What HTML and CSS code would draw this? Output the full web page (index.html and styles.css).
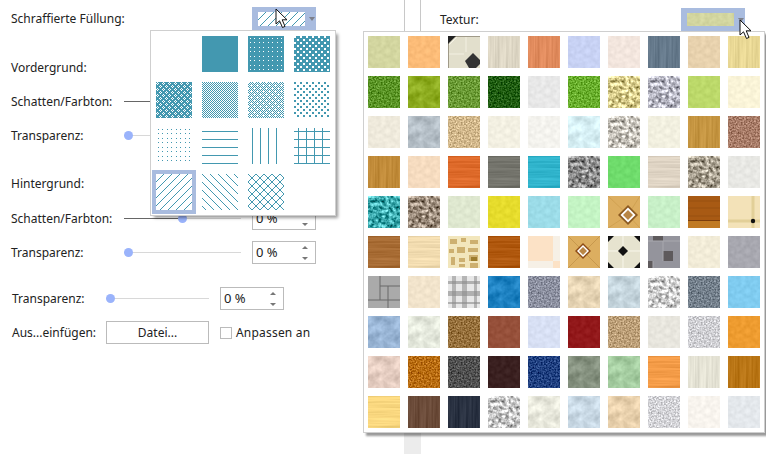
FILE: index.html
```html
<!DOCTYPE html>
<html lang="de">
<head>
<meta charset="utf-8">
<title>Füllung</title>
<link rel="stylesheet" href="styles.css">
</head>
<body>
<svg class="defs" width="0" height="0" aria-hidden="true">
  <defs>
    <pattern id="p-dots-a" width="9" height="9" patternUnits="userSpaceOnUse"><rect width="9" height="9" fill="#4398b0"/><path d="M2 2h1v1h-1zM6 2h1v1h-1zM2 6h1v1h-1zM6 6h1v1h-1z" fill="#fff"/></pattern>
    <pattern id="p-dots-b" width="6" height="6" patternUnits="userSpaceOnUse"><rect width="6" height="6" fill="#4398b0"/><path d="M0 0h2v2h-2zM3 3h2v2h-2z" fill="#fff"/></pattern>
    <pattern id="p-dense" width="6" height="6" patternUnits="userSpaceOnUse"><rect width="6" height="6" fill="#4398b0"/><path d="M1 0h1v1h-1zM0 1h1v1h-1zM2 1h1v1h-1zM1 2h1v1h-1zM4 3h1v1h-1zM3 4h1v1h-1zM5 4h1v1h-1zM4 5h1v1h-1z" fill="#fff"/></pattern>
    <pattern id="p-check" width="2" height="2" patternUnits="userSpaceOnUse"><path d="M0 0h1v1h-1zM1 1h1v1h-1z" fill="#4398b0"/></pattern>
    <pattern id="p-check-l" width="6" height="6" patternUnits="userSpaceOnUse"><path d="M2 0h1v1h-1zM4 0h1v1h-1zM1 1h1v1h-1zM3 1h1v1h-1zM5 1h1v1h-1zM0 2h1v1h-1zM2 2h1v1h-1zM4 2h1v1h-1zM1 3h1v1h-1zM5 3h1v1h-1zM0 4h1v1h-1zM2 4h1v1h-1zM4 4h1v1h-1zM1 5h1v1h-1zM3 5h1v1h-1zM5 5h1v1h-1z" fill="#4398b0"/></pattern>
    <pattern id="p-spots" width="6" height="6" patternUnits="userSpaceOnUse"><path d="M0 0h2v2h-2zM3 3h2v2h-2z" fill="#4398b0"/></pattern>
    <pattern id="p-fine" width="9" height="9" patternUnits="userSpaceOnUse"><path d="M2 1h1v1h-1zM6 1h1v1h-1zM2 5h1v1h-1zM6 5h1v1h-1z" fill="#4398b0"/></pattern>
    <pattern id="p-hl" width="8" height="8" patternUnits="userSpaceOnUse" y="3"><rect width="8" height="1" fill="#4398b0"/></pattern>
    <pattern id="p-vl" width="8" height="8" patternUnits="userSpaceOnUse" x="4"><rect width="1" height="8" fill="#4398b0"/></pattern>
    <pattern id="p-grid" width="8" height="8" patternUnits="userSpaceOnUse" x="4" y="3"><path d="M0 0h8v1h-8zM0 0h1v8h-1z" fill="#4398b0"/></pattern>
    <pattern id="p-up" width="8" height="8" patternUnits="userSpaceOnUse"><path d="M7 0h1v1h-1zM6 1h1v1h-1zM5 2h1v1h-1zM4 3h1v1h-1zM3 4h1v1h-1zM2 5h1v1h-1zM1 6h1v1h-1zM0 7h1v1h-1z" fill="#4398b0"/></pattern>
    <pattern id="p-down" width="8" height="8" patternUnits="userSpaceOnUse"><path d="M0 0h1v1h-1zM1 1h1v1h-1zM2 2h1v1h-1zM3 3h1v1h-1zM4 4h1v1h-1zM5 5h1v1h-1zM6 6h1v1h-1zM7 7h1v1h-1z" fill="#4398b0"/></pattern>
    <filter id="fine" x="0" y="0" width="1" height="1" color-interpolation-filters="sRGB"><feTurbulence type="fractalNoise" baseFrequency=".22" numOctaves="2" seed="4"/><feColorMatrix values="1 0 0 0 0 1 0 0 0 0 1 0 0 0 0 0 0 0 0 1"/><feComposite in="SourceGraphic" operator="arithmetic" k2="1" k3=".1" k4="-.05"/></filter>
    <filter id="wv" x="0" y="0" width="1" height="1" color-interpolation-filters="sRGB"><feTurbulence type="fractalNoise" baseFrequency=".5 .02" numOctaves="2" seed="7"/><feColorMatrix values="1 0 0 0 0 1 0 0 0 0 1 0 0 0 0 0 0 0 0 1"/><feComposite in="SourceGraphic" operator="arithmetic" k2="1" k3=".2" k4="-.1"/></filter>
    <filter id="wh" x="0" y="0" width="1" height="1" color-interpolation-filters="sRGB"><feTurbulence type="fractalNoise" baseFrequency=".02 .5" numOctaves="2" seed="9"/><feColorMatrix values="1 0 0 0 0 1 0 0 0 0 1 0 0 0 0 0 0 0 0 1"/><feComposite in="SourceGraphic" operator="arithmetic" k2="1" k3=".2" k4="-.1"/></filter>
    <filter id="speck" x="0" y="0" width="1" height="1" color-interpolation-filters="sRGB"><feTurbulence type="fractalNoise" baseFrequency=".6" numOctaves="2" seed="2"/><feColorMatrix values="1 0 0 0 0 1 0 0 0 0 1 0 0 0 0 0 0 0 0 1"/><feComposite in="SourceGraphic" operator="arithmetic" k2="1" k3=".6" k4="-.3"/></filter>
    <filter id="pebble" x="0" y="0" width="1" height="1" color-interpolation-filters="sRGB"><feTurbulence type="fractalNoise" baseFrequency=".28" numOctaves="3" seed="5"/><feColorMatrix values="1 0 0 0 0 1 0 0 0 0 1 0 0 0 0 0 0 0 0 1"/><feComposite in="SourceGraphic" operator="arithmetic" k2="1" k3="1.1" k4="-.55"/></filter>
    <filter id="marb" x="0" y="0" width="1" height="1" color-interpolation-filters="sRGB"><feTurbulence type="fractalNoise" baseFrequency=".12" numOctaves="3" seed="11"/><feColorMatrix values="1 0 0 0 0 1 0 0 0 0 1 0 0 0 0 0 0 0 0 1"/><feComposite in="SourceGraphic" operator="arithmetic" k2="1" k3=".28" k4="-.14"/></filter>
  </defs>
</svg>

<main class="page">
  <section class="left">
    <div class="row row-first"><span class="lab">Schraffierte Füllung:</span>
      <span class="pick"><svg class="swatch" width="47" height="14"><rect width="47" height="14" fill="#fff"/><rect width="47" height="14" fill="url(#p-up)"/></svg><i class="caret"></i></span>
    </div>
    <div class="row row-head"><span class="lab">Vordergrund:</span></div>
    <div class="row row-sub row-sub-top"><span class="lab">Schatten/Farbton:</span><span class="slider"><i class="fill"></i></span><span class="spin"><b>0 %</b><em></em></span></div>
    <div class="row row-sub"><span class="lab">Transparenz:</span><span class="slider"><i class="thumb0"></i></span><span class="spin"><b>0 %</b><em></em></span></div>
    <div class="row row-head row-head2"><span class="lab">Hintergrund:</span></div>
    <div class="row row-sub"><span class="lab">Schatten/Farbton:</span><span class="slider"><i class="fill"></i></span><span class="spin"><b>0 %</b><em></em></span></div>
    <div class="row row-sub"><span class="lab">Transparenz:</span><span class="slider"><i class="thumb0"></i></span><span class="spin"><b>0 %</b><em></em></span></div>
    <div class="row row-low"><span class="lab lab-short">Transparenz:</span><span class="slider slider-short"><i class="thumb0"></i></span><span class="spin spin-low"><b>0 %</b><em></em></span></div>
    <div class="row row-file"><span class="lab lab-short">Aus...einfügen:</span><button class="file">Datei...</button><span class="check"></span><span class="fit">Anpassen an</span></div>
  </section>

  <div class="divider"><div class="divider-fill"></div></div>

  <section class="right">
    <span class="lab">Textur:</span>
    <span class="pick pick-tex"><span class="swatch-tex"></span><i class="caret"></i></span>
  </section>

  <div class="pop pop-hatch">
    <svg class="ht"></svg>
    <svg class="ht"><rect width="36" height="36" fill="#4398b0"/></svg>
    <svg class="ht"><rect width="36" height="36" fill="url(#p-dots-a)"/></svg>
    <svg class="ht"><rect width="36" height="36" fill="url(#p-dots-b)"/></svg>
    <svg class="ht"><rect width="36" height="36" fill="url(#p-dense)"/></svg>
    <svg class="ht"><rect width="36" height="36" fill="url(#p-check)"/></svg>
    <svg class="ht"><rect width="36" height="36" fill="url(#p-check-l)"/></svg>
    <svg class="ht"><rect width="36" height="36" fill="url(#p-spots)"/></svg>
    <svg class="ht"><rect width="36" height="36" fill="url(#p-fine)"/></svg>
    <svg class="ht"><rect width="36" height="36" fill="url(#p-hl)"/></svg>
    <svg class="ht"><rect width="36" height="36" fill="url(#p-vl)"/></svg>
    <svg class="ht"><rect width="36" height="36" fill="url(#p-grid)"/></svg>
    <svg class="ht ht-sel"><rect width="36" height="36" fill="url(#p-up)"/></svg>
    <svg class="ht"><rect width="36" height="36" fill="url(#p-down)"/></svg>
    <svg class="ht"><rect width="36" height="36" fill="url(#p-up)"/><rect width="36" height="36" fill="url(#p-down)"/></svg>
    <svg class="ht"></svg>
  </div>

  <div class="pop pop-tex">
    <i class="tx fine c00"></i>
    <i class="tx fine c01"></i>
    <svg class="tx-s" viewBox="0 0 32 32"><rect width="32" height="32" fill="#e2dfcc"/><path d="M0 .5H32M.5 0V32" stroke="#a09a88"/><path d="M8 0H0V8z" fill="#222"/><path d="M25 17L32 24V28L28 32H21L17 25z" fill="#333"/><path d="M9 1L1 9" stroke="#f5f2e6"/><path d="M1 18H16M18 1V16" stroke="#f3f0e2"/></svg>
    <i class="tx wv c03"></i>
    <i class="tx wv c04"></i>
    <i class="tx fine c05"></i>
    <i class="tx fine c06"></i>
    <i class="tx wv c07"></i>
    <i class="tx fine c08"></i>
    <i class="tx wv c09"></i>

    <i class="tx speck c10"></i>
    <i class="tx marb c11"></i>
    <i class="tx speck c12"></i>
    <i class="tx speck c13"></i>
    <i class="tx fine c14"></i>
    <i class="tx speck c15"></i>
    <i class="tx pebble c16"></i>
    <i class="tx pebble c17"></i>
    <i class="tx fine c18"></i>
    <i class="tx fine c19"></i>

    <i class="tx fine c20"></i>
    <i class="tx marb c21"></i>
    <i class="tx speck c22"></i>
    <i class="tx fine c23"></i>
    <i class="tx fine c24"></i>
    <i class="tx marb c25"></i>
    <i class="tx pebble c26"></i>
    <i class="tx fine c27"></i>
    <i class="tx wv c28"></i>
    <i class="tx speck c29"></i>

    <i class="tx wv c30"></i>
    <i class="tx fine c31"></i>
    <i class="tx wh c32"></i>
    <i class="tx wh c33"></i>
    <i class="tx wh c34"></i>
    <i class="tx pebble c35"></i>
    <i class="tx fine c36"></i>
    <i class="tx wh c37"></i>
    <i class="tx pebble c38"></i>
    <i class="tx fine c39"></i>

    <i class="tx pebble c40"></i>
    <i class="tx pebble c41"></i>
    <i class="tx fine c42"></i>
    <i class="tx fine c43"></i>
    <i class="tx fine c44"></i>
    <i class="tx fine c45"></i>
    <svg class="tx-s" viewBox="0 0 32 32"><rect width="32" height="32" fill="#dcae60"/><path d="M0 0L20 19M32 0L20 19M0 32L20 19M32 32L20 19" stroke="#c89848" stroke-width=".6"/><path d="M20 9L30 19 20 29 10 19z" fill="#8c5a20"/><path d="M20 11.500L27.500 19 20 26.500 12.500 19z" fill="#fff"/><path d="M20 14L25 19 20 24 15 19z" fill="#b98645"/></svg>
    <i class="tx fine c47"></i>
    <svg class="tx-s" viewBox="0 0 32 32"><rect width="32" height="32" fill="#a85a14"/><path d="M0 5H32M0 12H32M0 20H32" stroke="#8e4a0e" opacity=".6"/><rect y="24" width="32" height="8" fill="#c07a24"/><rect y="24" width="32" height="1" fill="#7c3e0c"/></svg>
    <svg class="tx-s" viewBox="0 0 32 32"><rect width="32" height="32" fill="#f3e2b8"/><path d="M0 25H32M25 0V32" stroke="#e2cf98" stroke-width="3"/><circle cx="25" cy="25" r="2.200" fill="#111"/></svg>

    <i class="tx wh c50"></i>
    <i class="tx wh c51"></i>
    <svg class="tx-s" viewBox="0 0 32 32"><rect width="32" height="32" fill="#f2e6bc"/><path d="M2 3h7v5h-7zM13 2h5v4h-5zM22 4h8v4h-8zM1 13h5v4h-5zM9 11h8v6h-8zM20 12h10v4h-10zM3 21h4v8h-4zM11 22h6v4h-6zM21 19h9v6h-9zM22 27h8v5h-8zM11 28h6v3h-6z" fill="#cdb070"/><path d="M23 21h6v4h-6z" fill="#9c7c2c"/></svg>
    <i class="tx wh c53"></i>
    <svg class="tx-s" viewBox="0 0 32 32"><rect width="32" height="32" fill="#fce2c6"/><path d="M25 0h7v25h-7zM0 25h25v7h-25z" fill="#f6f0e6"/></svg>
    <svg class="tx-s" viewBox="0 0 32 32"><rect width="32" height="32" fill="#dcae60"/><path d="M0 0L32 32M32 0L0 32" stroke="#b88a40" stroke-width=".6"/><path d="M15 7L23 15 15 23 7 15z" fill="#8c4a14"/><path d="M15 9L21 15 15 21 9 15z" fill="#fff"/><path d="M15 11L19 15 15 19 11 15z" fill="#b98645"/></svg>
    <svg class="tx-s" viewBox="0 0 32 32"><rect width="32" height="32" fill="#e6e3cf"/><path d="M0 0h6L0 6zM32 0h-6l6 6zM0 32h6l-6-6zM32 32h-6l6-6z" fill="#111"/><path d="M15 10l5 5-5 5-5-5z" fill="#111"/><path d="M15 0v10M15 20v12M0 15h10M20 15h12" stroke="#f8f6ea"/></svg>
    <svg class="tx-s" viewBox="0 0 32 32"><rect width="32" height="32" fill="#94949c"/><path d="M5 0h10v5h-10zM15 15h10v10h-10zM0 25h5v7h-5z" fill="#5e5a5c"/><path d="M0 5h32M15 5v20M5 25v7" stroke="#a8a8ae"/></svg>
    <i class="tx fine c58"></i>
    <i class="tx fine c59"></i>

    <svg class="tx-s" viewBox="0 0 32 32"><rect width="32" height="32" fill="#aaaaaa"/><path d="M12 0v24M0 24h32M12 10h20M20 10v14M20 24v8" stroke="#686868"/></svg>
    <i class="tx fine c61"></i>
    <svg class="tx-s" viewBox="0 0 32 32"><rect width="32" height="32" fill="#e8e8e8"/><path d="M4 0h4v32h-4zM14 0h5v32h-5zM26 0h3v32h-3z" fill="#9a9a9a" opacity=".65"/><path d="M0 5h32v3h-32zM0 15h32v5h-32zM0 26h32v2h-32z" fill="#8a8a8a" opacity=".6"/></svg>
    <i class="tx marb c63"></i>
    <i class="tx speck c64"></i>
    <i class="tx marb c65"></i>
    <i class="tx marb c66"></i>
    <i class="tx pebble c67"></i>
    <i class="tx speck c68"></i>
    <i class="tx fine c69"></i>

    <i class="tx marb c70"></i>
    <i class="tx marb c71"></i>
    <i class="tx speck c72"></i>
    <i class="tx fine c73"></i>
    <i class="tx fine c74"></i>
    <i class="tx fine c75"></i>
    <i class="tx speck c76"></i>
    <i class="tx fine c77"></i>
    <i class="tx speck c78"></i>
    <i class="tx fine c79"></i>

    <i class="tx marb c80"></i>
    <i class="tx speck c81"></i>
    <i class="tx speck c82"></i>
    <i class="tx fine c83"></i>
    <i class="tx speck c84"></i>
    <i class="tx marb c85"></i>
    <i class="tx marb c86"></i>
    <i class="tx wh c87"></i>
    <i class="tx wv c88"></i>
    <i class="tx wv c89"></i>

    <i class="tx wh c90"></i>
    <i class="tx wv c91"></i>
    <i class="tx wv c92"></i>
    <i class="tx pebble c93"></i>
    <i class="tx marb c94"></i>
    <i class="tx marb c95"></i>
    <i class="tx marb c96"></i>
    <i class="tx speck c97"></i>
    <i class="tx fine c98"></i>
    <i class="tx fine c99"></i>
  </div>

  <svg class="cursor cursor-a" width="14" height="21" viewBox="0 0 14 21"><path d="M1 1V16L4.500 12.800 7.500 19.500 10 18.400 7.200 11.800H12z" fill="#fff" stroke="#111"/></svg>
  <svg class="cursor cursor-b" width="14" height="21" viewBox="0 0 14 21"><path d="M1 1V16L4.500 12.800 7.500 19.500 10 18.400 7.200 11.800H12z" fill="#fff" stroke="#111"/></svg>
</main>
</body>
</html>
```

FILE: styles.css
```css
* { box-sizing: border-box; }
html, body { margin: 0; padding: 0; background: #fff; }
body { width: 766px; height: 454px; overflow: hidden; font: 12px/16px "Noto Sans", "Open Sans", sans-serif; color: #222; }
.defs { position: absolute; }

.page { position: relative; display: flex; width: 766px; height: 454px; overflow: hidden; }

/* left panel */
.left { width: 404px; padding: 7px 0 0 11px; display: flex; flex-direction: column; }
.row { display: flex; align-items: center; }
.lab { flex: none; width: 113px; white-space: nowrap; }
.lab-short { width: 95px; padding-left: 1px; }
.row-first { height: 23px; }
.row-first .lab { width: 241px; }
.row-head { height: 16px; margin-top: 30px; }
.row-head2 { margin-top: 29px; }
.row-sub { height: 23px; margin-top: 11px; }
.row-head + .row-sub { margin-top: 15px; }
.row-head + .row-sub-top { margin-top: 14px; }
.row-low { height: 23px; margin-top: 23px; }
.row-file { height: 23px; margin-top: 11px; }

.pick { flex: none; display: flex; align-items: center; width: 64px; height: 23px; padding-left: 6px; background: #a9bcdf; }
.swatch { display: block; shape-rendering: crispEdges; }
.caret { width: 0; height: 0; margin-left: 4px; border: 3.500px solid transparent; border-top: 4px solid #7c7f8a; border-bottom: 0; }

.slider { position: relative; flex: none; width: 117px; height: 1px; margin-right: 11px; background: #d8d8d8; }
.slider-short { width: 103px; }
.thumb0::before, .fill::after { content: ""; position: absolute; top: -4px; width: 9px; height: 9px; border-radius: 50%; background: #9ab3fb; }
.thumb0::before { left: 0; }
.fill { position: absolute; left: 0; top: 0; width: 58px; height: 1px; background: #666; }
.fill::after { left: 54px; }

.spin { flex: none; position: relative; display: block; width: 64px; height: 23px; border: 1px solid #bbb; background: #fff; padding: 2px 0 0 3px; }
.spin b { font-weight: 400; font-size: 13px; }
.spin em { position: absolute; right: 6px; top: 4px; width: 7px; height: 14px; }
.spin em::before, .spin em::after { content: ""; position: absolute; left: 0; width: 0; height: 0; border: 3px solid transparent; }
.spin em::before { top: 0; border-top: 0; border-bottom: 3px solid #777; }
.spin em::after { bottom: 0; border-bottom: 0; border-top: 3px solid #777; }

.file { flex: none; width: 103px; height: 23px; margin: 0 11px 0 0; padding: 0; border: 1px solid #bbb; background: #fff; font: inherit; color: inherit; }
.check { flex: none; width: 12px; height: 12px; margin-right: 4px; border: 1px solid #bbb; }
.fit { white-space: nowrap; letter-spacing: .2px; }

/* divider */
.divider { flex: none; display: flex; flex-direction: column; justify-content: flex-end; width: 17px; height: 454px; border-left: 1px solid #c8c8c8; border-right: 1px solid #c8c8c8; }
.divider-fill { height: 21px; margin: 0 -1px; background: #ececec; }

/* right panel */
.right { flex: 1; display: flex; align-items: flex-start; padding: 8px 0 0 19px; }
.right .lab { width: 241px; line-height: 23px; }
.pick-tex { padding-left: 6px; }
.swatch-tex { display: block; width: 47px; height: 13px; background: #d3d6a0; filter: url(#fine); }

/* popups */
.pop { position: absolute; display: grid; background: #fff; border: 1px solid #cfcfcf; }
.pop-hatch { left: 150px; top: 30px; width: 186px; height: 186px; padding: 5px; grid-template-columns: repeat(4, 36px); grid-auto-rows: 36px; gap: 10px; box-shadow: 3px 3px 3px -1px rgba(0, 0, 0, .4); }
.pop-tex { left: 363px; top: 31px; width: 402px; height: 402px; padding: 4px; grid-template-columns: repeat(10, 32px); grid-auto-rows: 32px; gap: 8px; box-shadow: 3px 3px 2px rgba(0, 0, 0, .4); }
.ht { display: block; width: 36px; height: 36px; shape-rendering: crispEdges; }
.ht-sel { outline: 4px solid #a9bcdf; }
.tx { display: block; width: 32px; height: 32px; }
.fine { filter: url(#fine); }
.wv { filter: url(#wv); }
.wh { filter: url(#wh); }
.speck { filter: url(#speck); }
.pebble { filter: url(#pebble); }
.marb { filter: url(#marb); }
.tx-s { display: block; width: 32px; height: 32px; }

.cursor { position: absolute; }
.cursor-a { left: 275px; top: 8px; }
.cursor-b { left: 739px; top: 19px; }

/* texture colours */
.c00 { background: #d3d6a0; } .c01 { background: #fcbc78; } .c03 { background: #ddd6c4; } .c04 { background: #e08a5c; } .c05 { background: #c8d2f4; } .c06 { background: #f3e6de; } .c07 { background: #64788a; } .c08 { background: #e8d2ae; } .c09 { background: #e8d794; }
.c10 { background: #5a9426; } .c11 { background: #8cab1e; } .c12 { background: #6a9a35; } .c13 { background: #1f5c10; } .c14 { background: #e8e8e8; } .c15 { background: #68ae2c; } .c16 { background: #d8cc8c; } .c17 { background: #b8b8c4; } .c18 { background: #bcd96a; } .c19 { background: #faf4d8; }
.c20 { background: #efeadc; } .c21 { background: #b4bec6; } .c22 { background: #d2b88c; } .c23 { background: #f3f0e2; } .c24 { background: #f4f3ee; } .c25 { background: #d6eff4; } .c26 { background: #c8c4bc; } .c27 { background: #f2f0e0; } .c28 { background: #c49440; } .c29 { background: #a87c68; }
.c30 { background: #c08a38; } .c31 { background: #f6dcc0; } .c32 { background: #de6a2a; } .c33 { background: #74746c; } .c34 { background: #30b4cc; } .c35 { background: #8c8c8c; } .c36 { background: #6fdc6c; } .c37 { background: #dfd4c4; } .c38 { background: #a8a090; } .c39 { background: #e8e8e4; }
.c40 { background: #3aa8ac; } .c41 { background: #9c8c7c; } .c42 { background: #dfe8d0; } .c43 { background: #e6dc2c; } .c44 { background: #9cdce8; } .c45 { background: #c4f4c4; } .c47 { background: #c8f0c8; }
.c50 { background: #a86c34; } .c51 { background: #f2dcb0; } .c53 { background: #b0580e; } .c58 { background: #f2ecd8; } .c59 { background: #a8a8b0; }
.c61 { background: #f2e4cc; } .c63 { background: #1c80c0; } .c64 { background: #8c90a0; } .c65 { background: #e6d4b4; } .c66 { background: #c4d4dc; } .c67 { background: #d0d0d0; } .c68 { background: #74808c; } .c69 { background: #80ccf0; }
.c70 { background: #98b4d4; } .c71 { background: #e4e8dc; } .c72 { background: #96703c; } .c73 { background: #96503a; } .c74 { background: #d8e0f4; } .c75 { background: #92181a; } .c76 { background: #bc9f78; } .c77 { background: #e8e6de; } .c78 { background: #d0d0d4; } .c79 { background: #ee9c30; }
.c80 { background: #e4ccc0; } .c81 { background: #b86c10; } .c82 { background: #505050; } .c83 { background: #3a2020; } .c84 { background: #204080; } .c85 { background: #84907e; } .c86 { background: #a4cca0; } .c87 { background: #f49c48; } .c88 { background: #e4e2d4; } .c89 { background: #b87414; }
.c90 { background: #fad880; } .c91 { background: #6a4a38; } .c92 { background: #283040; } .c93 { background: #c8c8c8; } .c94 { background: #e8e8dc; } .c95 { background: #c8d8e4; } .c96 { background: #e8d0ac; } .c97 { background: #d4d4d8; } .c98 { background: #f8f4ee; } .c99 { background: #e4e8ec; }
```
